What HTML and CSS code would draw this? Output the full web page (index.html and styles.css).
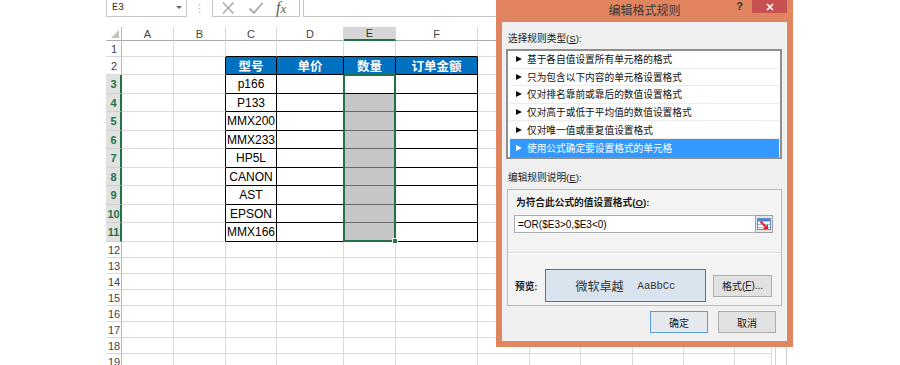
FILE: index.html
```html
<!DOCTYPE html>
<html lang="zh-CN">
<head>
<meta charset="utf-8">
<title>编辑格式规则</title>
<link rel="stylesheet" href="styles.css">
</head>
<body>
<div class="stage">
  <div class="excel">
    <div class="fbar">
      <div class="namebox"><span class="nb-text">E3</span><span class="nb-arrow"></span></div>
      <div class="grip">⋮</div>
      <div class="fxbox">
        <svg class="ic-x" width="14" height="14" viewBox="0 0 14 14"><path d="M2 1.5 L12.5 12.5 M12.5 1.5 L2 12.5" stroke="#a9a9a9" stroke-width="1.6" fill="none"/></svg>
        <svg class="ic-ok" width="16" height="14" viewBox="0 0 16 14"><path d="M1.5 7.5 L6 12 L14.5 2" stroke="#a9a9a9" stroke-width="1.8" fill="none"/></svg>
        <span class="fx"><i class="fx-f">f</i><i class="fx-x">x</i></span>
      </div>
      <div class="finput"></div>
    </div>
    <div class="sheet">
      <div class="c corner"><span class="tri"></span></div><div class="c h">A</div><div class="c h">B</div><div class="c h">C</div><div class="c h">D</div><div class="c h hs">E</div><div class="c h">F</div><div class="c h">G</div><div class="c h">H</div><div class="c h">I</div><div class="c h">J</div><div class="c h">K</div><div class="c h">L</div><div class="c sb"></div>

      <div class="c r">1</div><div class="c"></div><div class="c"></div><div class="c tt"></div><div class="c tt"></div><div class="c tt"></div><div class="c tt"></div><div class="c"></div><div class="c"></div><div class="c"></div><div class="c"></div><div class="c"></div><div class="c"></div><div class="c sb"></div>

      <div class="c r">2</div><div class="c"></div><div class="c tl"></div><div class="c t th">型号</div><div class="c t th">单价</div><div class="c t th">数量</div><div class="c t th">订单金额</div><div class="c"></div><div class="c"></div><div class="c"></div><div class="c"></div><div class="c"></div><div class="c"></div><div class="c sb"></div>

      <div class="c r rs">3</div><div class="c"></div><div class="c tl"></div><div class="c t">p166</div><div class="c t"></div><div class="c t"></div><div class="c t"></div><div class="c"></div><div class="c"></div><div class="c"></div><div class="c"></div><div class="c"></div><div class="c"></div><div class="c sb"></div>

      <div class="c r rs">4</div><div class="c"></div><div class="c tl"></div><div class="c t">P133</div><div class="c t"></div><div class="c t g"></div><div class="c t"></div><div class="c"></div><div class="c"></div><div class="c"></div><div class="c"></div><div class="c"></div><div class="c"></div><div class="c sb"></div>

      <div class="c r rs">5</div><div class="c"></div><div class="c tl"></div><div class="c t">MMX200</div><div class="c t"></div><div class="c t g"></div><div class="c t"></div><div class="c"></div><div class="c"></div><div class="c"></div><div class="c"></div><div class="c"></div><div class="c"></div><div class="c sb"></div>

      <div class="c r rs">6</div><div class="c"></div><div class="c tl"></div><div class="c t">MMX233</div><div class="c t"></div><div class="c t g"></div><div class="c t"></div><div class="c"></div><div class="c"></div><div class="c"></div><div class="c"></div><div class="c"></div><div class="c"></div><div class="c sb"></div>

      <div class="c r rs">7</div><div class="c"></div><div class="c tl"></div><div class="c t">HP5L</div><div class="c t"></div><div class="c t g"></div><div class="c t"></div><div class="c"></div><div class="c"></div><div class="c"></div><div class="c"></div><div class="c"></div><div class="c"></div><div class="c sb"></div>

      <div class="c r rs">8</div><div class="c"></div><div class="c tl"></div><div class="c t">CANON</div><div class="c t"></div><div class="c t g"></div><div class="c t"></div><div class="c"></div><div class="c"></div><div class="c"></div><div class="c"></div><div class="c"></div><div class="c"></div><div class="c sb"></div>

      <div class="c r rs">9</div><div class="c"></div><div class="c tl"></div><div class="c t">AST</div><div class="c t"></div><div class="c t g"></div><div class="c t"></div><div class="c"></div><div class="c"></div><div class="c"></div><div class="c"></div><div class="c"></div><div class="c"></div><div class="c sb"></div>

      <div class="c r rs">10</div><div class="c"></div><div class="c tl"></div><div class="c t">EPSON</div><div class="c t"></div><div class="c t g"></div><div class="c t"></div><div class="c"></div><div class="c"></div><div class="c"></div><div class="c"></div><div class="c"></div><div class="c"></div><div class="c sb"></div>

      <div class="c r rs">11</div><div class="c"></div><div class="c tl"></div><div class="c t">MMX166</div><div class="c t"></div><div class="c t g"></div><div class="c t"></div><div class="c"></div><div class="c"></div><div class="c"></div><div class="c"></div><div class="c"></div><div class="c"></div><div class="c sb"></div>

      <div class="c r">12</div><div class="c"></div><div class="c"></div><div class="c"></div><div class="c"></div><div class="c"></div><div class="c"></div><div class="c"></div><div class="c"></div><div class="c"></div><div class="c"></div><div class="c"></div><div class="c"></div><div class="c sb"></div>
      <div class="c r">13</div><div class="c"></div><div class="c"></div><div class="c"></div><div class="c"></div><div class="c"></div><div class="c"></div><div class="c"></div><div class="c"></div><div class="c"></div><div class="c"></div><div class="c"></div><div class="c"></div><div class="c sb"></div>
      <div class="c r">14</div><div class="c"></div><div class="c"></div><div class="c"></div><div class="c"></div><div class="c"></div><div class="c"></div><div class="c"></div><div class="c"></div><div class="c"></div><div class="c"></div><div class="c"></div><div class="c"></div><div class="c sb"></div>
      <div class="c r">15</div><div class="c"></div><div class="c"></div><div class="c"></div><div class="c"></div><div class="c"></div><div class="c"></div><div class="c"></div><div class="c"></div><div class="c"></div><div class="c"></div><div class="c"></div><div class="c"></div><div class="c sb"></div>
      <div class="c r">16</div><div class="c"></div><div class="c"></div><div class="c"></div><div class="c"></div><div class="c"></div><div class="c"></div><div class="c"></div><div class="c"></div><div class="c"></div><div class="c"></div><div class="c"></div><div class="c"></div><div class="c sb"></div>
      <div class="c r">17</div><div class="c"></div><div class="c"></div><div class="c"></div><div class="c"></div><div class="c"></div><div class="c"></div><div class="c"></div><div class="c"></div><div class="c"></div><div class="c"></div><div class="c"></div><div class="c"></div><div class="c sb"></div>
      <div class="c r">18</div><div class="c"></div><div class="c"></div><div class="c"></div><div class="c"></div><div class="c"></div><div class="c"></div><div class="c"></div><div class="c"></div><div class="c"></div><div class="c"></div><div class="c"></div><div class="c"></div><div class="c sb"></div>
      <div class="c r">19</div><div class="c"></div><div class="c"></div><div class="c"></div><div class="c"></div><div class="c"></div><div class="c"></div><div class="c"></div><div class="c"></div><div class="c"></div><div class="c"></div><div class="c"></div><div class="c"></div><div class="c sb"></div>

      <div class="sel"><span class="handle"></span></div>
    </div>
  </div>

  <div class="dialog">
    <div class="titlebar">
      <span></span>
      <span class="title">编辑格式规则</span>
      <div class="tctrl">
        <span class="help">?</span>
        <span class="close"><svg width="8" height="8" viewBox="0 0 8 8"><path d="M1 1 L7 7 M7 1 L1 7" stroke="#fff" stroke-width="1.6"/></svg></span>
      </div>
    </div>
    <div class="client">
      <div class="lbl lbl1">选择规则类型(<u>S</u>):</div>
      <ul class="list">
        <li class="item"><span class="tri-r"></span>基于各自值设置所有单元格的格式</li>
        <li class="item"><span class="tri-r"></span>只为包含以下内容的单元格设置格式</li>
        <li class="item"><span class="tri-r"></span>仅对排名靠前或靠后的数值设置格式</li>
        <li class="item"><span class="tri-r"></span>仅对高于或低于平均值的数值设置格式</li>
        <li class="item"><span class="tri-r"></span>仅对唯一值或重复值设置格式</li>
        <li class="item on"><span class="tri-r"></span>使用公式确定要设置格式的单元格</li>
      </ul>
      <div class="lbl lbl2">编辑规则说明(<u>E</u>):</div>
      <div class="group">
        <div class="gsec">
          <div class="glbl">为符合此公式的值设置格式(<u>O</u>):</div>
          <div class="finp">
            <span class="ftext">=OR($E3&gt;0,$E3&lt;0)</span>
            <span class="rbtn"><svg width="14" height="12" viewBox="0 0 14 12"><rect x="0.5" y="0.5" width="13" height="11" fill="#fff" stroke="#6a8cc0"/><rect x="1" y="1" width="12" height="2.5" fill="#4f86d4"/><path d="M1 6.5 H13 M1 9.5 H13" stroke="#9bbbe6"/><path d="M3.5 3.5 L8.5 8.5" stroke="#d8262a" stroke-width="2"/><path d="M11 11 L11 6 L6 11 Z" fill="#d8262a"/></svg></span>
          </div>
        </div>
        <div class="prow">
          <span class="plbl">预览:</span>
          <div class="pbox"><span class="pcn">微软卓越</span><span class="pen">AaBbCc</span></div>
          <span class="btn bfmt">格式(<u>F</u>)...</span>
        </div>
      </div>
      <div class="btns">
        <span class="btn ok">确定</span>
        <span class="btn">取消</span>
      </div>
    </div>
  </div>
</div>
</body>
</html>
```
FILE: styles.css
```css
* { box-sizing: border-box; }
html, body { margin: 0; padding: 0; background: #fff; }
body { font-family: "Liberation Sans", "Noto Sans CJK SC", sans-serif; }

.stage {
  position: relative;
  width: 900px;
  height: 365px;
  overflow: hidden;
  padding-left: 106px;
}
.excel { width: 681px; }

/* formula bar */
.fbar { display: flex; height: 17px; }
.namebox {
  width: 81px;
  border: 1px solid #c6c6c6;
  border-top: none;
  display: flex;
  align-items: center;
  justify-content: space-between;
  padding: 0 4px 1px 5px;
}
.nb-text { font: 10px "Liberation Mono", monospace; color: #333; }
.nb-arrow {
  width: 0; height: 0;
  border-left: 3px solid transparent;
  border-right: 3px solid transparent;
  border-top: 3px solid #666;
}
.grip {
  width: 25px;
  display: flex;
  align-items: center;
  justify-content: center;
  color: #b4b4b4;
  font: 11px "DejaVu Sans", sans-serif;
}
.fxbox {
  width: 88px;
  border: 1px solid #c6c6c6;
  border-top: none;
  display: flex;
  align-items: center;
  padding-left: 8px;
}
.ic-ok { margin-left: 13px; }
.fx { margin-left: 12px; color: #5a5a5a; font-family: "Liberation Serif", serif; line-height: 14px; }
.fx-f { font-size: 16px; }
.fx-x { font-size: 13px; }
.finput {
  flex: 1;
  margin-left: 3px;
  border-left: 1px solid #c6c6c6;
  border-bottom: 1px solid #c6c6c6;
}

/* sheet */
.sheet {
  position: relative;
  margin-top: 10px;
  display: grid;
  grid-template-columns: 16px 52px 52px 51px 67px 52px 82px 52px 51px 52px 51px 51px 37px 15px;
  grid-template-rows: 14px 16px 18px 19px 18px 19px 18px 19px 18px 19px 18px 19px 16px 16px 16px 16px 16px 16px 16px 16px;
}
.c {
  min-width: 0;
  overflow: hidden;
  border-right: 1px solid #dadada;
  border-bottom: 1px solid #dadada;
  display: flex;
  align-items: center;
  justify-content: center;
  font-size: 12px;
  color: #000;
  white-space: nowrap;
}
.h {
  font-size: 11px;
  color: #444;
  border-right-color: #d8d8d8;
  border-bottom-color: #ababab;
}
.hs {
  background: #d6d6d6;
  border-bottom: 2px solid #217346;
  color: #333;
}
.corner {
  justify-content: flex-end;
  align-items: flex-end;
  padding: 0 2px 2px 0;
  border-right-color: #b8b8b8;
  border-bottom-color: #ababab;
}
.tri {
  width: 0; height: 0;
  border-left: 8px solid transparent;
  border-bottom: 8px solid #c3c3c3;
}
.r {
  font-size: 11px;
  color: #444;
  border-right-color: #b8b8b8;
  padding-left: 1px;
}
.rs {
  background: #e1e1e1;
  color: #217346;
  font-weight: bold;
  border-right: 2px solid #217346;
  border-bottom-color: #cfcfcf;
}
.tt { border-bottom-color: #000; }
.tl { border-right-color: #000; }
.t { border-right-color: #000; border-bottom-color: #000; }
.th {
  background: #0070c0;
  color: #fff;
  font: bold 12.5px "Noto Sans CJK SC", sans-serif;
}
.g { background: #c6c6c6; border-bottom-color: #6a6a6a; }
.sb {
  border-bottom: none;
  border-right-color: #cdcdcd;
  background: linear-gradient(to right, transparent 3px, #d4d4d4 3px, #d4d4d4 4px, transparent 4px);
}
.sel {
  position: absolute;
  grid-column: 6 / 7;
  grid-row: 4 / 13;
  top: -1px;
  left: -1px;
  right: 0;
  bottom: 0;
  border: 2px solid #217346;
  pointer-events: none;
}
.handle {
  position: absolute;
  right: -4px;
  bottom: -4px;
  width: 6px;
  height: 6px;
  background: #217346;
  border: 1px solid #fff;
}

/* dialog */
.dialog {
  position: absolute;
  left: 496px;
  top: 0;
  width: 297px;
  height: 347px;
  background: #e0855f;
  padding: 0 6px 6px;
  display: flex;
  flex-direction: column;
}
.titlebar {
  height: 22px;
  display: grid;
  grid-template-columns: 1fr auto 1fr;
}
.title {
  font: 12px "Noto Sans CJK SC", sans-serif;
  color: #3a3a3a;
  line-height: 20px;
}
.tctrl { justify-self: end; display: flex; align-items: flex-start; }
.help {
  font: bold 11px "Liberation Sans", sans-serif;
  color: #333;
  line-height: 11px;
  margin: 1px 9px 0 0;
}
.close {
  width: 35px;
  height: 13px;
  background: #c75050;
  display: flex;
  align-items: center;
  justify-content: center;
}
.client {
  flex: 1;
  background: #f0f0f0;
  padding: 0 5px 0 4px;
  display: flex;
  flex-direction: column;
  font-size: 9.7px;
  color: #1a1a1a;
}
.lbl { line-height: 14px; padding-left: 2px; }
.lbl1 { margin-top: 10px; margin-bottom: 3px; }
.lbl2 { margin-top: 12px; margin-bottom: 4px; }
.list {
  list-style: none;
  margin: 0;
  padding: 0;
  height: 110px;
  border: 2px solid #8e8e8e;
  background: #fff;
}
.item {
  height: 17.6px;
  margin: 0 1px 0 2px;
  padding-left: 6px;
  display: flex;
  align-items: center;
  border-bottom: 1px solid #ececec;
  color: #111;
}
.tri-r {
  width: 0; height: 0;
  border-top: 3px solid transparent;
  border-bottom: 3px solid transparent;
  border-left: 6px solid #111;
  margin-right: 5px;
}
.item.on { background: #3399ff; color: #fff; border-bottom: none; }
.item.on .tri-r { border-left-color: #fff; }
.group {
  height: 117px;
  margin-left: 1px;
  border: 1px solid #bcbcbc;
  background: #f3f3f3;
  display: flex;
  flex-direction: column;
}
.gsec {
  height: 63px;
  padding: 6px 8px 0 6px;
  border-bottom: 1px solid #dddddd;
}
.glbl { font-weight: bold; line-height: 14px; padding-left: 2px; }
.finp {
  margin-top: 5px;
  height: 18px;
  border: 1px solid #abadb3;
  background: #fff;
  display: flex;
  align-items: center;
  justify-content: space-between;
}
.ftext { font: 10px "Liberation Sans", sans-serif; color: #000; padding-left: 3px; }
.rbtn {
  width: 18px;
  height: 18px;
  margin: -1px -1px -1px 0;
  border: 1px solid #a0a0a0;
  background: #e6e6e6;
  display: flex;
  align-items: center;
  justify-content: center;
}
.prow {
  flex: 1;
  border-top: 1px solid #fff;
  display: flex;
  align-items: center;
  padding: 15px 9px 3px 7px;
}
.plbl { width: 30px; font-weight: bold; }
.pbox {
  width: 161px;
  height: 33px;
  border: 1px solid #6f6f6f;
  background: #d9e4ef;
  display: flex;
  align-items: center;
  justify-content: center;
  gap: 14px;
}
.pcn { font: 12px "Noto Sans CJK SC", sans-serif; color: #333; }
.pen { font: 10.5px "Liberation Mono", monospace; color: #333; }
.btn {
  width: 58px;
  height: 22px;
  border: 1px solid #adadad;
  background: #e1e1e1;
  display: flex;
  align-items: center;
  justify-content: center;
  font-size: 10px;
  color: #1a1a1a;
}
.bfmt { width: 59px; margin-left: 7px; }
.btns {
  margin-top: 5px;
  display: flex;
  justify-content: flex-end;
  gap: 10px;
  padding-right: 6px;
}
.ok { border-color: #5b9de1; background: #e5e9ee; }
```
